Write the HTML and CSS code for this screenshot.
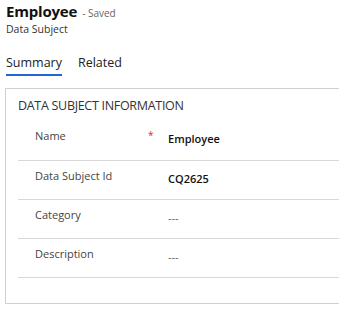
FILE: index.html
```html
<!DOCTYPE html>
<html lang="en">
<head>
    <meta charset="UTF-8">
    <meta name="viewport" content="width=device-width, initial-scale=1.0">
    <title>Employee</title>
    <link rel="stylesheet" href="styles.css">
</head>
<body>
    <div class="record-header">
        <div class="title-line">
            <span class="record-title">Employee</span>
            <span class="save-state">- Saved</span>
        </div>
        <div class="entity-name">Data Subject</div>
    </div>
    <div class="tabs">
        <a class="tab active" href="#summary">Summary</a>
        <a class="tab" href="#related">Related</a>
    </div>
    <div class="section">
        <h2 class="section-title">DATA SUBJECT INFORMATION</h2>
        <div class="field-row">
            <div class="field-label">Name</div>
            <div class="required">*</div>
            <div class="field-value">Employee</div>
        </div>
        <div class="field-row">
            <div class="field-label">Data Subject Id</div>
            <div class="required"></div>
            <div class="field-value">CQ2625</div>
        </div>
        <div class="field-row">
            <div class="field-label">Category</div>
            <div class="required"></div>
            <div class="field-value empty">---</div>
        </div>
        <div class="field-row">
            <div class="field-label">Description</div>
            <div class="required"></div>
            <div class="field-value empty">---</div>
        </div>
    </div>
</body>
</html>
```

FILE: styles.css
```css
body {
    margin: 0;
    background-color: #fff;
    font-family: "Open Sans", "Noto Sans", sans-serif;
    color: #333;
    overflow: hidden;
}
.record-header {
    padding: 1px 0 0 6px;
}
.title-line {
    display: flex;
    align-items: baseline;
    gap: 5px;
}
.record-title {
    font-size: 15px;
    font-weight: 700;
    color: #111;
    letter-spacing: -0.2px;
}
.save-state {
    font-size: 10px;
    color: #666;
}
.entity-name {
    font-size: 10.5px;
    color: #333;
    margin-top: 1px;
}
.tabs {
    display: flex;
    gap: 16px;
    padding: 18px 0 0 6px;
}
.tab {
    font-size: 12.5px;
    color: #222;
    text-decoration: none;
    padding-bottom: 3px;
    border-bottom: 2px solid transparent;
}
.tab.active {
    border-bottom-color: #2266d4;
}
.section {
    margin: 12px 0 0 5px;
    border: 1px solid #d0d0d0;
    border-right: none;
    padding: 0 0 25px 12px;
}
.section-title {
    margin: 0;
    padding: 8px 0 7px 0;
    font-size: 12.5px;
    font-weight: 400;
    color: #333;
    letter-spacing: -0.3px;
}
.field-row {
    display: flex;
    height: 39px;
    padding-top: 7px;
    box-sizing: border-box;
    border-bottom: 1px solid #d8d8d8;
    font-size: 11px;
}
.field-row:first-of-type {
    height: 40px;
}
.field-label {
    width: 113px;
    padding-left: 17px;
    color: #444;
}
.required {
    width: 20px;
    color: #e0261f;
    font-size: 10px;
}
.field-value {
    padding-top: 3px;
    font-weight: 600;
    color: #111;
}
.field-value.empty {
    font-weight: 400;
    color: #666;
}
```
